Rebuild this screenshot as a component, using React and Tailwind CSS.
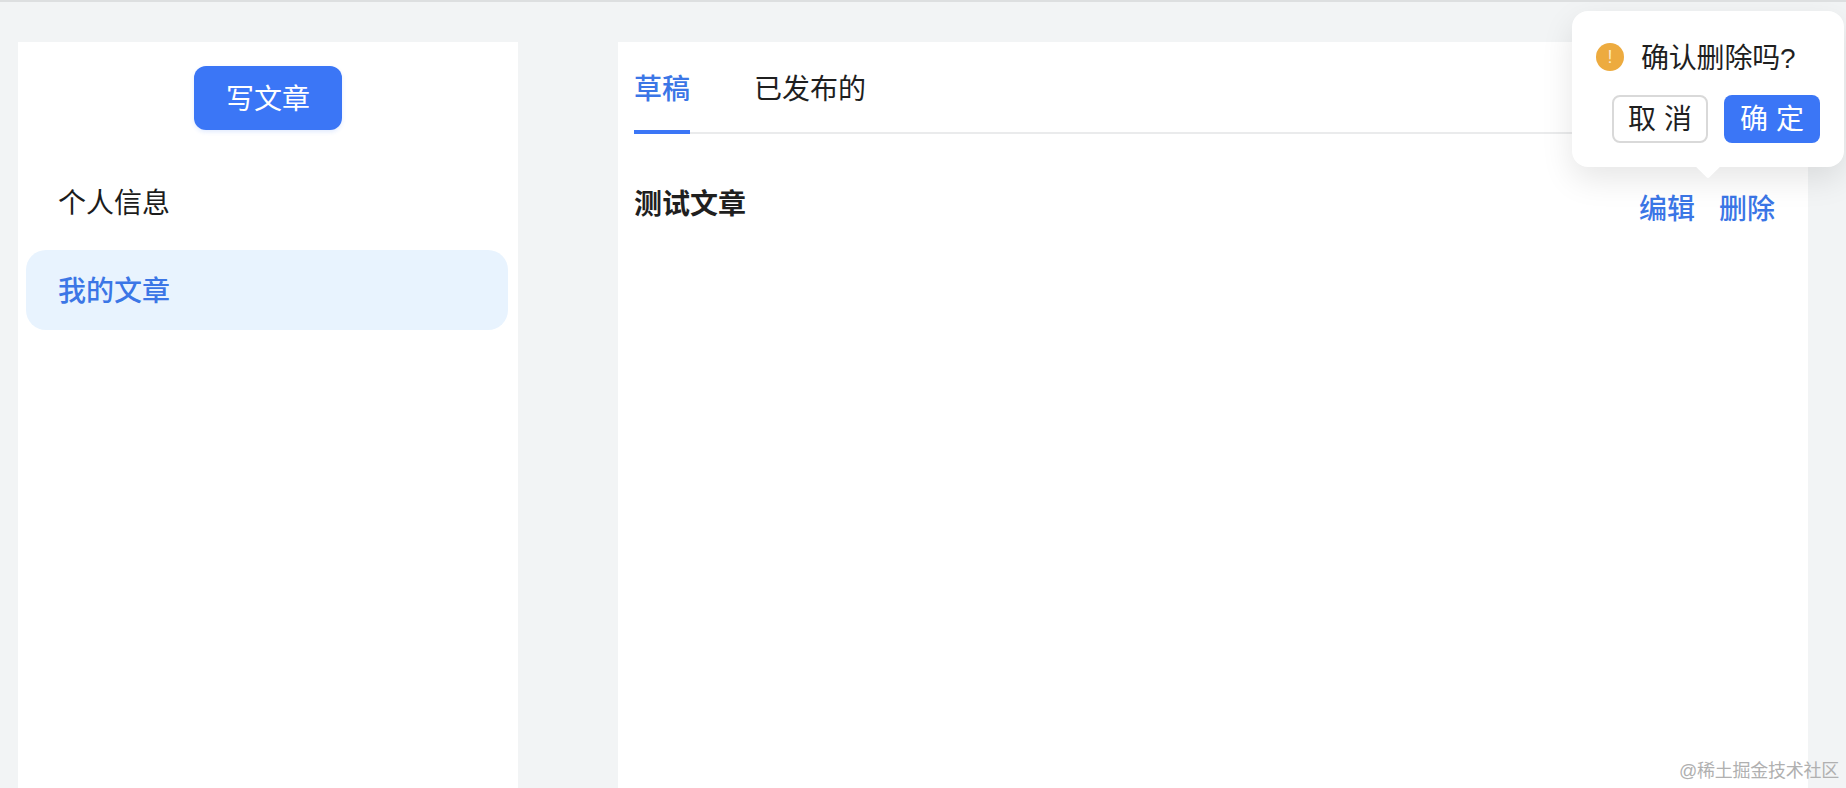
const fontStack = 'font-["Liberation_Sans","Noto_Sans_CJK_SC",sans-serif]';

const WarnIcon = () => (
  <span className="flex h-7 w-7 shrink-0 items-center justify-center rounded-full bg-[#edab3f] text-[18px] leading-none text-[#fbe9c8]">
    !
  </span>
);

const App = () => {
  return (
    <div className={`relative h-[788px] w-full overflow-hidden border-t-2 border-[#dddfe0] bg-[#f2f4f5] ${fontStack}`}>
      <div className="flex h-full gap-[100px] pl-[18px] pt-10">
        {/* Sidebar */}
        <aside className="flex w-[500px] flex-col items-center bg-white pt-6 pr-[10px] pl-2">
          <button className="ml-[2px] h-16 w-[148px] rounded-xl bg-[#3b76f6] pt-1 text-[28px] text-white shadow-[0_2px_4px_rgba(59,118,246,0.15)]">
            写文章
          </button>
          <div className="mt-6 flex h-24 w-full items-center pt-[4px] pl-8 text-[28px] text-[#1c1c1c]">个人信息</div>
          <div className="flex h-20 w-full items-center rounded-[20px] bg-[#e8f3fe] pt-[4px] pl-8 text-[28px] font-medium text-[#3b76e6]">
            我的文章
          </div>
        </aside>

        {/* Main panel */}
        <main className="w-[1190px] bg-white px-4">
          <div className="flex h-[92px] items-end gap-[64px] border-b-2 border-[#eaebec]">
            <div className="-mb-[2px] flex h-[92px] w-14 items-center justify-center border-b-4 border-[#3b76f6] pt-[8px] text-[28px] font-medium whitespace-nowrap text-[#3b76e6]">
              草稿
            </div>
            <div className="flex h-[90px] items-center pt-[6px] text-[28px] text-[#1f1f1f]">已发布的</div>
          </div>
          <div className="flex justify-between pt-[47px] pr-[17px]">
            <h3 className="text-[28px] leading-[48px] font-bold text-[#1f1f1f]">测试文章</h3>
            <div className="flex gap-6 pt-[5px] text-[28px] leading-[48px] font-medium text-[#3b76e6]">
              <span>编辑</span>
              <span>删除</span>
            </div>
          </div>
        </main>
      </div>

      {/* Popconfirm */}
      <div className="absolute top-[9px] left-[1572px] h-[156px] w-[272px] rounded-2xl bg-white shadow-[0_12px_32px_rgba(0,0,0,0.1)]">
        <div className="flex h-[84px] items-center pt-2 pl-6">
          <WarnIcon />
          <span className="ml-[17px] pt-[3px] text-[28px] tracking-[-0.2px] text-[#1f1f1f]">确认删除吗?</span>
        </div>
        <div className="flex justify-end gap-4 pr-6">
          <button className="h-12 w-24 rounded-lg border-2 border-[#d9d9d9] bg-white pt-[1px] text-[28px] leading-none text-[#1f1f1f]">
            取 消
          </button>
          <button className="h-12 w-24 rounded-lg bg-[#3b76f6] pt-[1px] text-[28px] leading-none text-white">确 定</button>
        </div>
        <span className="absolute top-[146px] left-[127px] h-[18px] w-[18px] rotate-45 rounded-[2px] bg-white" />
      </div>

      {/* Watermark */}
      <span className="absolute right-[7px] bottom-[5px] text-[18px] leading-6 tracking-[-0.25px] text-[#b0b0b0]">@稀土掘金技术社区</span>
    </div>
  );
};

export default App;
